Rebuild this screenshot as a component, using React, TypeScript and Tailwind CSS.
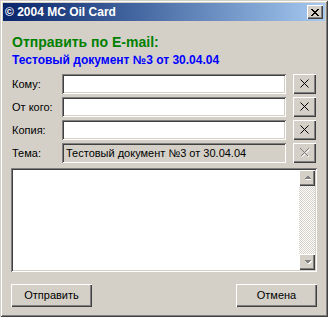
import React from "react";

const sunken =
  "shadow-[inset_1px_1px_0_#808080,inset_-1px_-1px_0_#ffffff,inset_2px_2px_0_#404040,inset_-2px_-2px_0_#d4d0c8]";
const raised =
  "shadow-[inset_1px_1px_0_#ffffff,inset_-1px_-1px_0_#404040,inset_-2px_-2px_0_#808080]";

function XIcon({ disabled }: { disabled?: boolean }) {
  if (disabled) {
    return (
      <svg width="10" height="10" viewBox="0 0 10 10" shapeRendering="crispEdges">
        <path d="M1.5 1.5 L9.5 9.5 M9.5 1.5 L1.5 9.5" stroke="#ffffff" strokeWidth="1" />
        <path d="M0.5 0.5 L8.5 8.5 M8.5 0.5 L0.5 8.5" stroke="#808080" strokeWidth="1" />
      </svg>
    );
  }
  return (
    <svg width="10" height="10" viewBox="0 0 10 10">
      <path d="M0.5 0.5 L8.5 8.5 M8.5 0.5 L0.5 8.5" stroke="#000000" strokeWidth="1" />
    </svg>
  );
}

function Row({ label, value, disabled }: { label: string; value?: string; disabled?: boolean }) {
  return (
    <div className="flex h-[20px] items-center">
      <div className="w-[51px] pl-[1px] text-[11px] leading-[13px] text-black">{label}</div>
      <div
        className={`flex h-[20px] w-[224px] items-center px-[4px] text-[11px] leading-[13px] text-black ${sunken} ${
          disabled ? "bg-[#d4d0c8]" : "bg-white"
        }`}
      >
        {value}
      </div>
      <div
        className={`ml-[7px] flex h-[20px] w-[23px] items-center justify-center bg-[#d4d0c8] ${raised}`}
      >
        <XIcon disabled={disabled} />
      </div>
    </div>
  );
}

function Arrow({ up }: { up?: boolean }) {
  return (
    <div className={`flex h-[16px] w-[16px] items-center justify-center bg-[#d4d0c8] ${raised}`}>
      <svg width="9" height="6" viewBox="0 0 9 6" shapeRendering="crispEdges">
        {up ? (
          <>
            <path d="M2 5 L8 5 L5 2 Z" fill="#ffffff" />
            <path d="M1 4 L8 4 L4.5 0.5 Z" fill="#808080" />
          </>
        ) : (
          <>
            <path d="M2 2 L9 2 L5.5 5.5 Z" fill="#ffffff" />
            <path d="M1 1 L8 1 L4.5 4.5 Z" fill="#808080" />
          </>
        )}
      </svg>
    </div>
  );
}

export default function App() {
  return (
    <div
      className="flex h-[317px] w-[328px] flex-col bg-[#d4d0c8] p-[3px] shadow-[inset_1px_1px_0_#d4d0c8,inset_-1px_-1px_0_#404040,inset_2px_2px_0_#ffffff,inset_-2px_-2px_0_#808080]"
      style={{ fontFamily: '"Liberation Sans", Arial, sans-serif' }}
    >
      <div className="flex h-[18px] items-center justify-between bg-gradient-to-r from-[#0a246a] to-[#a6caf0] pl-[2px] pr-[2px]">
        <span className="text-[12px] font-bold leading-[14px] text-white">© 2004 MC Oil Card</span>
        <div className={`flex h-[14px] w-[16px] items-center justify-center bg-[#d4d0c8] ${raised}`}>
          <svg width="8" height="7" viewBox="0 0 8 7" shapeRendering="crispEdges">
            <path d="M0 0h2v1h-2z M6 0h2v1h-2z M1 1h2v1h-2z M5 1h2v1h-2z M2 2h4v1h-4z M3 3h2v1h-2z M2 4h4v1h-4z M1 5h2v1h-2z M5 5h2v1h-2z M0 6h2v1h-2z M6 6h2v1h-2z" fill="#000" />
          </svg>
        </div>
      </div>
      <div className="flex flex-col pl-[8px] pr-[8px]">
        <div className="mt-[13px] pl-[1px] text-[14px] font-bold leading-[16px] text-[#008000]">
          Отправить по E-mail:
        </div>
        <div className="mt-[3px] pl-[1px] text-[12px] font-bold leading-[14px] text-[#0000ff]">
          Тестовый документ №3 от 30.04.04
        </div>
        <div className="mt-[7px] flex flex-col gap-[3px]">
          <Row label="Кому:" />
          <Row label="От кого:" />
          <Row label="Копия:" />
          <Row label="Тема:" value="Тестовый документ №3 от 30.04.04" disabled />
        </div>
        <div className={`mt-[5px] flex h-[104px] w-[306px] bg-white p-[2px] ${sunken}`}>
          <div className="flex-1" />
          <div className="flex w-[16px] flex-col">
            <Arrow up />
            <div className="flex-1 bg-[repeating-conic-gradient(#d4d0c8_0_25%,#ffffff_0_50%)] [background-size:2px_2px]" />
            <Arrow />
          </div>
        </div>
        <div className="mt-[12px] flex justify-between">
          <div
            className={`flex h-[23px] w-[81px] items-center justify-center bg-[#d4d0c8] text-[11px] text-black ${raised}`}
          >
            Отправить
          </div>
          <div
            className={`flex h-[23px] w-[81px] items-center justify-center bg-[#d4d0c8] text-[11px] text-black ${raised}`}
          >
            Отмена
          </div>
        </div>
      </div>
    </div>
  );
}
